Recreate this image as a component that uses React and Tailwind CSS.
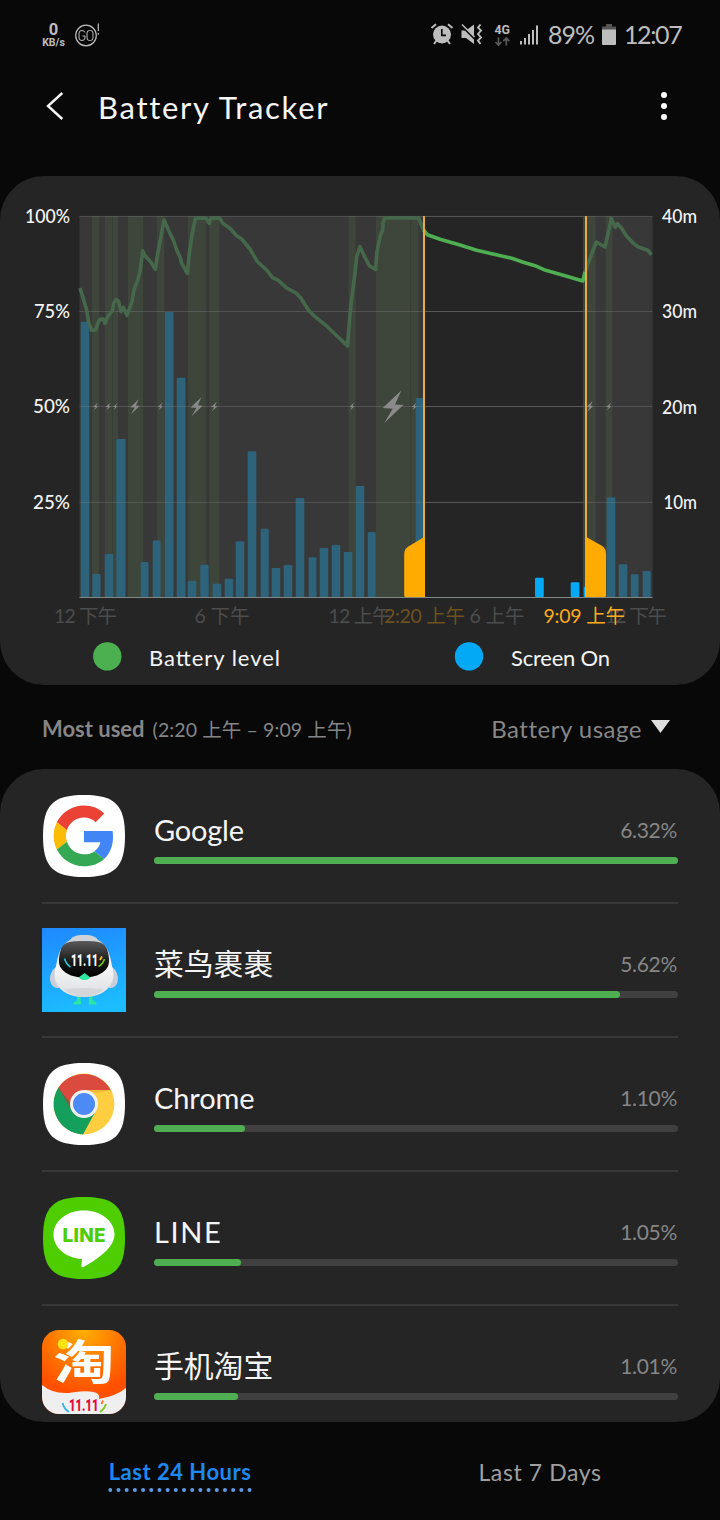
import React, { useState } from "react";

const chargeBands = [
  [92, 7.2], [105, 13], [128, 15], [157, 7.3], [188, 18.2], [209.5, 9.8],
  [348.7, 7], [376, 34.5], [411, 7.5], [583, 12.7], [605.7, 6.6],
];

// x, width, top
const screenBars = [
  [80.7, 8.6, 321.7], [92.3, 8.2, 574], [104.7, 8.6, 554], [116.3, 9.2, 439],
  [140.7, 7.8, 562], [152.7, 7.8, 540.5], [164.7, 8.8, 312], [176.7, 8.8, 377.7],
  [187.7, 8.6, 581], [200.3, 8.4, 564.7], [212.7, 8.6, 583.7], [224.7, 8.6, 578.7],
  [235.7, 8.6, 541.3], [247.7, 8.6, 451.3], [260.7, 8, 528.7], [271.7, 8.6, 568],
  [283.7, 8.6, 565], [295.7, 8.6, 498], [308.7, 7.8, 557.3], [319.7, 8.6, 548],
  [331.7, 8.6, 545], [343.7, 8.6, 552], [355.7, 8.6, 486], [367.7, 8, 532],
  [415.7, 8, 398], [606.7, 8.6, 497.3], [618.7, 8.6, 564.3], [630.7, 7.8, 574.3],
  [642.7, 8, 571],
];

const activeBars = [[535, 8.8, 577.7], [570.7, 8.7, 582.3], [583.8, 1.6, 586.7]];

// center x, height
const bolts = [
  [95.7, 8], [108.3, 8], [115.3, 7], [135, 15], [160.3, 8], [196.7, 19],
  [214.3, 10], [352, 8], [393, 33], [414.3, 8], [589.8, 11], [608.8, 8],
];

const batteryBefore =
  "80,288 86.7,310 88.7,322.7 91.7,330.5 95.7,330 98,323 100,319.3 103.3,319 105,323.5 107.7,316.7 112.3,310.7 113.7,303.3 116,299.5 118.5,301 121,311.7 123.3,307.3 127,315.5 132,301.7 134,290 137.7,280 140.3,270 142.7,250.7 145,255.7 150.7,261.7 155.3,269.3 158.3,250 161,236.7 164,220 168.3,230 173.3,240 176.7,250 180.3,257.7 181.7,263.3 187.3,273.5 189.3,253.3 191.7,236.7 194.3,223.3 195.7,218.3 206,218.3 209.3,223.5 210.7,218.3 220,218.3 222.7,223.3 230,228.3 236.7,235.7 241.7,239 250,249 257.3,261.7 266.7,270 272.3,277.3 278.3,280.3 286.7,288 296,293 301,298.3 308.3,310 315,316.7 327.3,326.7 331.7,331 340,338.7 347.5,346 349,326.7 350.7,306.7 355,273.3 356.7,256.7 360,246.7 364.3,256 369.3,265.7 375.7,269.5 376.7,253.3 380,236.7 382.7,230 383,223.3 384.7,218 418.7,218 420.7,223.3 423.5,230";
const batteryActive =
  "423.5,230 427.3,234.7 440,239.3 460,245 476.7,250.3 511.7,258.3 523.3,262.3 535,265.7 544,269.7 566.7,276.3 582.8,281 585,272";
const batteryAfter =
  "585,272 590,258.3 596.3,242 605,247 607.3,236.7 609.3,228.3 611.3,218.5 615.3,227.5 617.3,223.7 621.7,228.3 625.7,235 632.3,242.3 637.7,246.7 647.7,250.3 651.5,254.7";

const Chart = () => (
  <svg viewBox="0 176 720 509" className="block w-full h-[509px]" fontFamily='Lato, "Noto Sans CJK SC", sans-serif'>
    <rect x="79.5" y="216" width="344" height="381" fill="#383838" />
    <rect x="586" y="216" width="66.5" height="381" fill="#383838" />
    {chargeBands.map(([x, w]) => (
      <rect key={x} x={x} y="216" width={w} height="381" fill="#3e463c" />
    ))}
    <path d="M112.6 216V597M410.8 216V597" stroke="#373d36" strokeWidth="0.8" />

    {screenBars.map(([x, w, top]) => (
      <rect key={x} x={x} y={top} width={w} height={597 - top} rx="1.2" fill="#2d637b" />
    ))}
    {activeBars.map(([x, w, top]) => (
      <rect key={x} x={x} y={top} width={w} height={597 - top} rx="1.2" fill="#03a9f4" />
    ))}

    {bolts.map(([x, h]) => (
      <polygon
        key={x}
        points="8.3,-16.2 -10.3,1.5 -0.3,2.2 -8.7,16.5 10.3,-1.5 2,-2.2"
        transform={`translate(${x} 406.6) scale(${h / 33})`}
        fill="#8a8a8a"
      />
    ))}

    <path d="M79.5 216.4H652.5M79.5 311.5H652.5M79.5 406.5H652.5M79.5 502.4H652.5" stroke="#888888" strokeOpacity="0.33" />
    <path d="M425 216.4H583M425 311.5H583M425 406.5H583M425 502.4H583" stroke="#888888" strokeOpacity="0.3" />
    <path d="M79.5 597.5H652.5" stroke="#808888" />

    <g fill="none" strokeWidth="3.6" strokeLinejoin="round">
      <polyline points={batteryBefore} stroke="#46684a" />
      <polyline points={batteryAfter} stroke="#46684a" />
      <polyline points={batteryActive} stroke="#4fae52" />
    </g>

    {/* range handles */}
    <rect x="423" y="216" width="2" height="381" fill="#e8ab3e" />
    <rect x="585" y="216" width="2" height="381" fill="#e8ab3e" />
    <path d="M425 536.5L408 546.8Q404.2 549.4 404.2 554V595.5Q404.2 597 405.7 597H425Z" fill="#ffab00" />
    <path d="M585.3 536.5L602.3 546Q606 548.8 606 553.5V595.5Q606 597 604.5 597H585.3Z" fill="#ffab00" />

    <g fill="#f5f5f5" fontSize="20" fontWeight="500">
      <text x="25" y="222.5" textLength="45" lengthAdjust="spacingAndGlyphs">100%</text>
      <text x="34" y="318" textLength="36" lengthAdjust="spacingAndGlyphs">75%</text>
      <text x="33" y="413" textLength="37" lengthAdjust="spacingAndGlyphs">50%</text>
      <text x="33" y="508.5" textLength="37" lengthAdjust="spacingAndGlyphs">25%</text>
      <text x="662" y="222.5" textLength="35" lengthAdjust="spacingAndGlyphs">40m</text>
      <text x="662" y="318" textLength="35" lengthAdjust="spacingAndGlyphs">30m</text>
      <text x="662" y="413.5" textLength="35" lengthAdjust="spacingAndGlyphs">20m</text>
      <text x="663.5" y="508.5" textLength="33.5" lengthAdjust="spacingAndGlyphs">10m</text>
    </g>

    <g fontSize="19.5" fill="#4d4d4d">
      <text x="54" y="622.5" textLength="63">12 下午</text>
      <text x="194.5" y="622.5" textLength="55">6 下午</text>
      <text x="328.5" y="622.5" textLength="63">12 上午</text>
      <text x="469.5" y="622.5" textLength="55">6 上午</text>
      <text x="605" y="622.5" textLength="62">12 下午</text>
      <text x="384" y="622.5" textLength="81" fill="#6f501f">2:20 上午</text>
      <text x="543.5" y="622.5" textLength="81.5" fill="#ffab1c">9:09 上午</text>
    </g>

    <circle cx="107.3" cy="656.4" r="14.2" fill="#4caf50" />
    <circle cx="469" cy="656.4" r="14.2" fill="#03a9f4" />
    <g fontSize="22" fill="#f5f5f5">
      <text x="149" y="665.5" textLength="131">Battery level</text>
      <text x="511" y="665.5" textLength="99">Screen On</text>
    </g>
  </svg>
);

const SQUIRCLE = "M42 1C73 1 83 11 83 42C83 73 73 83 42 83C11 83 1 73 1 42C1 11 11 1 42 1Z";

const GoogleIcon = () => (
  <svg viewBox="0 0 84 84" className="w-[84px] h-[84px]">
    <path d={SQUIRCLE} fill="#fff" />
    <g transform="translate(11.6 11.6) scale(1.265)">
      <path fill="#EA4335" d="M24 9.5c3.54 0 6.71 1.22 9.21 3.6l6.85-6.85C35.9 2.38 30.47 0 24 0 14.62 0 6.51 5.38 2.56 13.22l7.98 6.19C12.43 13.72 17.74 9.5 24 9.5z" />
      <path fill="#4285F4" d="M46.98 24.55c0-1.57-.15-3.09-.38-4.55H24v9.02h12.94c-.58 2.96-2.26 5.48-4.78 7.18l7.73 6c4.51-4.18 7.09-10.36 7.09-17.65z" />
      <path fill="#FBBC05" d="M10.53 28.59c-.48-1.45-.76-2.99-.76-4.59s.27-3.14.76-4.59l-7.98-6.19C.92 16.46 0 20.12 0 24c0 3.88.92 7.54 2.56 10.78l7.97-6.19z" />
      <path fill="#34A853" d="M24 48c6.48 0 11.93-2.13 15.89-5.81l-7.73-6c-2.15 1.45-4.92 2.3-8.16 2.3-6.26 0-11.57-4.22-13.47-9.91l-7.98 6.19C6.51 42.62 14.62 48 24 48z" />
    </g>
  </svg>
);

const CainiaoIcon = () => (
  <svg viewBox="0 0 84 84" className="w-[84px] h-[84px]">
    <defs>
      <linearGradient id="sky" x1="0.2" y1="0" x2="0.4" y2="1">
        <stop offset="0" stopColor="#1f8bff" />
        <stop offset="1" stopColor="#1cbcff" />
      </linearGradient>
      <linearGradient id="body" x1="0" y1="0" x2="0" y2="1">
        <stop offset="0.1" stopColor="#cfd3d8" />
        <stop offset="0.5" stopColor="#f7f7f8" />
        <stop offset="1" stopColor="#dcdee2" />
      </linearGradient>
      <linearGradient id="visor" x1="0" y1="0" x2="0" y2="1">
        <stop offset="0" stopColor="#5a5a5a" />
        <stop offset="0.6" stopColor="#161616" />
        <stop offset="1" stopColor="#000" />
      </linearGradient>
    </defs>
    <rect width="84" height="84" fill="url(#sky)" />
    <path d="M35 68h3.5v4q1.5 4.500-1 4.500h-6q-1-2 3.500-4zM47 68h3.500v4q5 2.500 4 4.500h-7q-1.500-1-.500-4.500z" fill="#2ae6a0" />
    <path d="M16 38C9 41 7 49 8.500 54 9.500 58 13 60.500 17 60zM68 38C75 41 77 49 75.500 54 74.500 58 71 60.500 67 60z" fill="#c9ced8" />
    <path d="M42 7C51 7 54 9 56 12C66 17 68 27 70 38C76 56 63 69 42 69C21 69 8 56 14 38C16 27 18 17 28 12C30 9 33 7 42 7Z" fill="url(#body)" />
    <path d="M22 61Q42 59 62 61Q53 69 42 69Q31 69 22 61Z" fill="#d5d6da" />
    <path d="M42 13C57 13 62 14 65 21C68 30 67.500 37 65 40C60 47 51 49.500 42 49.500C33 49.500 24 47 19 40C16.500 37 16 30 19 21C22 14 27 13 42 13Z" fill="url(#visor)" />
    <path d="M36.500 49.500L42.500 45L48.500 49.500Q46 52 42.500 52Q39 52 36.500 49.500Z" fill="#2ae6a0" />
    <path d="M22.500 30.500Q24 36 28.500 39" stroke="#23c8dd" strokeWidth="1.6" fill="none" />
    <path d="M62.500 31Q61 36 56.500 38.500" stroke="#74c51c" strokeWidth="1.6" fill="none" />
    <path d="M60 28.500L58 32" stroke="#ffc21a" strokeWidth="1.8" />
    <text x="29" y="37.500" fontSize="16" fontWeight="900" fill="#fff" textLength="27" lengthAdjust="spacingAndGlyphs" fontFamily="Roboto, sans-serif">11.11</text>
  </svg>
);

const ChromeIcon = () => (
  <svg viewBox="0 0 84 84" className="w-[84px] h-[84px]">
    <path d={SQUIRCLE} fill="#fff" />
    <circle cx="42" cy="42" r="30.4" fill="#ffcd40" />
    <path d="M68.700 28H42L29.600 49L15.700 26.800A30.400 30.400 0 0 1 68.700 28Z" fill="#db4a3e" />
    <path d="M16.300 25.800A30.400 30.400 0 0 0 41 72.400L53.500 49.500L42 55.500L29.700 48.600Z" fill="#159f5c" />
    <path d="M16.300 25.800L29.700 48.600L28.300 41Z" fill="#0c7d46" opacity="0.5" />
    <path d="M42 28H68.700L55 31Z" fill="#d9a12c" opacity="0.45" />
    <circle cx="42" cy="42" r="14" fill="#f1f1f1" />
    <circle cx="42" cy="42" r="11" fill="#4c8bf5" />
  </svg>
);

const LineIcon = () => (
  <svg viewBox="0 0 84 84" className="w-[84px] h-[84px]">
    <path d={SQUIRCLE} fill="#4ecd00" />
    <path d="M42 14.500C59 14.500 72.500 25 72.500 38.500C72.500 50 59 61.500 41.500 71Q39.200 72 39.400 69.500L40 63C23.500 62 11.500 51.500 11.500 38.500C11.500 25 25 14.500 42 14.500Z" fill="#fff" />
    <text x="20.5" y="45.8" fontSize="19" fontWeight="800" fill="#4ecd00" textLength="43" fontFamily="Inter, sans-serif">LINE</text>
  </svg>
);

const TaobaoIcon = () => (
  <svg viewBox="0 0 84 84" className="w-[84px] h-[84px]">
    <defs>
      <clipPath id="taobaoClip">
        <rect width="84" height="84" rx="17" />
      </clipPath>
      <radialGradient id="taobaoBg" cx="0.5" cy="0" r="0.75">
        <stop offset="0" stopColor="#ffb000" />
        <stop offset="0.5" stopColor="#ff7d00" />
        <stop offset="1" stopColor="#ff5000" />
      </radialGradient>
    </defs>
    <g clipPath="url(#taobaoClip)">
      <rect width="84" height="84" fill="url(#taobaoBg)" />
      <path d="M0 55Q12 65 30 62.500Q50 59.500 56 64Q58 66 57 69Q74 66 84 58V84H0Z" fill="#efefef" />
      <text x="11.5" y="49" fontSize="47" fontWeight="700" fill="#fff" textLength="61" lengthAdjust="spacingAndGlyphs" fontFamily='"Noto Sans CJK SC", sans-serif'>淘</text>
      <circle cx="21" cy="14" r="5.3" fill="#ffe412" />
      <text x="27" y="80.5" fontSize="17" fontWeight="900" fill="#e8083e" textLength="29.5" lengthAdjust="spacingAndGlyphs" fontFamily="Roboto, sans-serif">11.11</text>
      <path d="M20.500 73Q22 79 27 82" stroke="#35b4e8" strokeWidth="1.8" fill="none" />
      <path d="M64 74Q62.500 79 58 82" stroke="#82c722" strokeWidth="1.8" fill="none" />
      <path d="M61 70.500L59.500 74" stroke="#f2691c" strokeWidth="1.8" />
    </g>
  </svg>
);

const apps = [
  { name: "Google", usage: "6.32%", width: 524, icon: <GoogleIcon />, nameClass: "text-[29px] tracking-[-0.2px]" },
  { name: "菜鸟裹裹", usage: "5.62%", width: 465.5, icon: <CainiaoIcon />, nameClass: "text-[29.8px]" },
  { name: "Chrome", usage: "1.10%", width: 91, icon: <ChromeIcon />, nameClass: "text-[29px] tracking-[-0.1px]" },
  { name: "LINE", usage: "1.05%", width: 87, icon: <LineIcon />, nameClass: "text-[29px] tracking-[1.6px]" },
  { name: "手机淘宝", usage: "1.01%", width: 83.5, icon: <TaobaoIcon />, nameClass: "text-[29.8px]" },
];

const StatusBar = () => (
  <div className="flex h-[70px] items-center justify-between pl-[42px] pr-[38px] text-[#bdbdbd]">
    <div className="flex items-center gap-[10px]">
      <div className="flex w-[23px] flex-col items-center font-['Roboto'] font-bold">
        <span className="text-[16.5px] leading-[14px]">0</span>
        <span className="text-[10.5px] leading-[11px]">KB/s</span>
      </div>
      <svg viewBox="75 20 26 28" className="h-7 w-[26px]" fill="none" stroke="#bdbdbd">
        <circle cx="86" cy="34.5" r="10.3" strokeWidth="1.2" />
        <path d="M84.800 31.500Q84.500 29.500 82 29.500Q79 29.500 79 32V37Q79 39.500 82 39.500Q85 39.500 85 37V35H82.500" />
        <rect x="87" y="29.5" width="6" height="10" rx="2.5" />
        <path d="M98.300 22.500V30M98.300 32V33.700" strokeWidth="1.2" />
      </svg>
    </div>
    <div className="flex items-center">
      <svg viewBox="430 20 110 28" className="h-7 w-[110px]" fill="#bdbdbd">
        <circle cx="442" cy="33.5" r="9" />
        <path d="M434 43L436.500 39.500M450 43L447.500 39.500M431.500 27L436 23.300M452.500 27L448 23.300" stroke="#bdbdbd" strokeWidth="2" />
        <path d="M441.800 28V34.300H446" stroke="#080808" strokeWidth="1.7" fill="none" />
        <path d="M461.500 29.500H466L474 23.500V43L466 37H461.500Z" />
        <path d="M461 24L475.500 38.500" stroke="#080808" strokeWidth="2.4" />
        <path d="M462 23.500L474.500 36" stroke="#bdbdbd" strokeWidth="1.6" />
        <path d="M480.500 23.500L478 26.500L481 29.500L478 33L481 36.500L478 39.500L480.500 43" fill="none" stroke="#bdbdbd" strokeWidth="1.9" />
        <text x="494.5" y="32.8" fontSize="12" fontWeight="700" textLength="15.5" lengthAdjust="spacingAndGlyphs" fontFamily="Roboto, sans-serif">4G</text>
        <path d="M498.500 36.500V44M495.500 41L498.500 44.200L501.500 41M506.300 44.500V37M503.300 40.200L506.300 37L509.300 40.200" fill="none" stroke="#5a5a5a" strokeWidth="1.7" />
        <path d="M520 40h2v3.500h-2zM524 37h2v6.500h-2zM528 33h2v10.500h-2zM532 29h2v14.500h-2zM536 24.500h2v19h-2z" />
      </svg>
      <span className="ml-2 w-[46px] whitespace-nowrap text-[25px] tracking-[-1px]">89%</span>
      <svg viewBox="602 23 14 21" className="ml-2 mb-[2px] h-[21px] w-[14px]">
        <path d="M606 23H612V25.500H616V29H602V25.500H606Z" fill="#555" />
        <path d="M602 28.500H616V43Q616 44 615 44H603Q602 44 602 43Z" fill="#bdbdbd" />
      </svg>
      <span className="ml-2 w-[58px] whitespace-nowrap text-[25px] tracking-[-1.4px]">12:07</span>
    </div>
  </div>
);

export default function App() {
  const [tab, setTab] = useState("day");

  return (
    <div className="flex h-[1520px] w-[720px] flex-col overflow-hidden bg-[#080808] font-['Lato','Noto_Sans_CJK_SC',sans-serif] text-[#f5f5f5]">
      <StatusBar />

      <header className="flex h-[106px] items-start pl-[46px] pr-[53px] pt-[14px]">
        <div className="flex h-[44px] w-full items-center">
          <button aria-label="Back">
            <svg viewBox="0 0 18 28" className="h-7 w-[18px]" fill="none" stroke="#f5f5f5" strokeWidth="2.4">
              <path d="M16.300 1L2 14L16.300 27" />
            </svg>
          </button>
          <h1 className="ml-[34px] pt-[2px] text-[31px] leading-none tracking-[1.7px]">Battery Tracker</h1>
          <button aria-label="More options" className="ml-auto flex flex-col gap-[4.5px]">
            <span className="size-[6.5px] rounded-full bg-white" />
            <span className="size-[6.5px] rounded-full bg-white" />
            <span className="size-[6.5px] rounded-full bg-white" />
          </button>
        </div>
      </header>

      <section className="h-[509px] shrink-0 overflow-hidden rounded-[44px] bg-[#252525]">
        <Chart />
      </section>

      <div className="flex h-[84px] shrink-0 items-center justify-between pl-[42px] pr-[50px] pt-[3px] text-[#868686]">
        <div className="flex items-baseline whitespace-nowrap">
          <span className="text-[22px] font-bold">Most used</span>
          <span className="ml-2 text-[19.5px] tracking-[0.1px]">(2:20 上午 – 9:09 上午)</span>
        </div>
        <button className="flex items-center gap-[9px] text-[24px] leading-none tracking-[0.5px]">
          Battery usage
          <svg viewBox="0 0 19 13" className="-mt-[4px] h-[13px] w-[19px]">
            <path d="M0 0H19L9.500 13Z" fill="#dedede" />
          </svg>
        </button>
      </div>

      <section className="h-[653px] shrink-0 overflow-hidden rounded-[44px] bg-[#252525] px-[42px] pt-px">
        {apps.map((app) => (
          <div key={app.name} className="flex h-[134px] gap-7 border-b-2 border-[#383838] pt-6">
            <div className="shrink-0">{app.icon}</div>
            <div className="flex-1">
              <div className="flex h-[62.5px] items-center justify-between pt-[9px]">
                <span className={`leading-none ${app.nameClass}`}>{app.name}</span>
                <span className="pr-px text-[21px] leading-none tracking-[-0.3px] text-[#868686]">{app.usage}</span>
              </div>
              <div className="h-[7px] rounded-full bg-[#404040]">
                <div className="h-full rounded-full bg-[#4fae52]" style={{ width: app.width }} />
              </div>
            </div>
          </div>
        ))}
      </section>

      <nav className="grid h-[98px] grid-cols-2">
        <button className="flex flex-col items-center pt-[38px]" onClick={() => setTab("day")}>
          <span className={tab === "day" ? "text-[22px] font-bold leading-6 tracking-[0.5px] text-[#1e88ee]" : "text-[23px] leading-6 text-[#a0a0a0]"}>
            Last 24 Hours
          </span>
          {tab === "day" && (
            <svg viewBox="0 0 144 4" className="mt-[4px] h-1 w-[144px]">
              <path d="M2.300 2H142" stroke="#5f9be6" strokeWidth="4" strokeLinecap="round" strokeDasharray="0 8.19" />
            </svg>
          )}
        </button>
        <button className="flex flex-col items-center pt-[38px]" onClick={() => setTab("week")}>
          <span className={tab === "week" ? "text-[22px] font-bold leading-6 tracking-[0.5px] text-[#1e88ee]" : "text-[23px] leading-6 tracking-[0.6px] text-[#a0a0a0]"}>
            Last 7 Days
          </span>
        </button>
      </nav>
    </div>
  );
}
